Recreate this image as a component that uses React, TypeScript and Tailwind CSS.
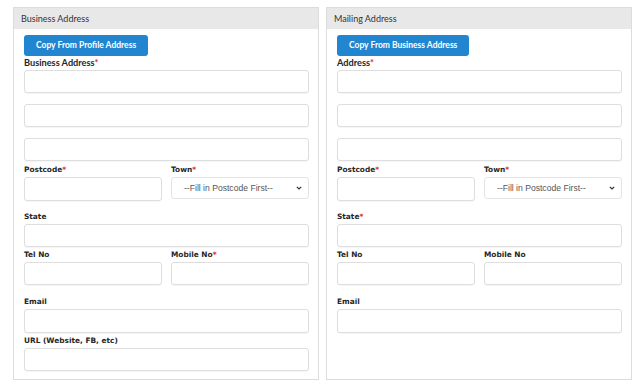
const lato = "font-['Lato','Open_Sans',sans-serif]";
const verdana = "font-['DejaVu_Sans','Verdana',sans-serif]";

function Req() {
  return <span className="text-[#db2828]">*</span>;
}

function Label({ text, req, latoFont, className = "" }: { text: string; req?: boolean; latoFont?: boolean; className?: string }) {
  return (
    <div
      className={`h-[14px] flex items-center font-bold text-[#262626] ${latoFont ? `${lato} text-[9.2px]` : `${verdana} text-[7.4px]`} ${className}`}
    >
      {text}
      {req && <Req />}
    </div>
  );
}

function Input({ className = "" }: { className?: string }) {
  return (
    <input
      type="text"
      className={`block w-full h-[23px] rounded-[3px] border border-[#dedede] bg-white shadow-[0_1px_1px_rgba(0,0,0,0.04)] outline-none ${className}`}
    />
  );
}

function TownSelect() {
  return (
    <div className="relative h-[22px] rounded-[3px] border border-[#e4e4e4] bg-white flex items-center pl-[12px] font-['Liberation_Sans',Arial,sans-serif] text-[8.6px] text-[#555]">
      --Fill in Postcode First--
      <svg
        className="absolute right-[6px] top-1/2 -translate-y-1/2"
        width="6"
        height="4"
        viewBox="0 0 6 4"
        fill="none"
      >
        <path d="M0.8 0.8 L3 3 L5.2 0.8" stroke="#333" strokeWidth="1.2" />
      </svg>
    </div>
  );
}

function Panel({ title, button, children }: { title: string; button: string; children: React.ReactNode }) {
  return (
    <div className="border border-[#dcdcdc] bg-white flex flex-col">
      <div className={`h-[21px] bg-[#e8e8e8] px-[7px] flex items-center ${lato} text-[9px] text-[#333]`}>{title}</div>
      <div className="pl-[10px] pr-[9px] pt-[6px] pb-[8px]">
        <button className={`block h-[21px] px-[12px] rounded-[3px] bg-[#2185d0] text-white font-bold ${lato} text-[8.5px]`}>
          {button}
        </button>
        {children}
      </div>
    </div>
  );
}

function AddressFields({ firstLabel, stateReq, mobileReq }: { firstLabel: string; stateReq?: boolean; mobileReq?: boolean }) {
  return (
    <>
      <Label text={firstLabel} req latoFont />
      <Input />
      <Input className="mt-[11px]" />
      <Input className="mt-[11px]" />

      <div className="grid grid-cols-2 gap-x-[9px] mt-[2px]">
        <div>
          <Label text="Postcode" req />
          <Input className="h-[24px]" />
        </div>
        <div>
          <Label text="Town" req />
          <TownSelect />
        </div>
      </div>

      <Label text="State" req={stateReq} className="mt-[9px]" />
      <Input />

      <div className="grid grid-cols-2 gap-x-[9px] mt-[1px]">
        <div>
          <Label text="Tel No" />
          <Input />
        </div>
        <div>
          <Label text="Mobile No" req={mobileReq} />
          <Input />
        </div>
      </div>

      <Label text="Email" className="mt-[10px]" />
      <Input className="h-[24px]" />
    </>
  );
}

export default function App() {
  return (
    <div className="w-[640px] h-[391px] bg-white pt-[7px] pl-[13px] pr-[8px]">
      <div className="grid grid-cols-2 gap-x-[7px]">
        <Panel title="Business Address" button="Copy From Profile Address">
          <AddressFields firstLabel="Business Address" mobileReq />
          <Label text="URL (Website, FB, etc)" className="mt-[1px]" />
          <Input />
        </Panel>
        <Panel title="Mailing Address" button="Copy From Business Address">
          <AddressFields firstLabel="Address" stateReq />
        </Panel>
      </div>
    </div>
  );
}
